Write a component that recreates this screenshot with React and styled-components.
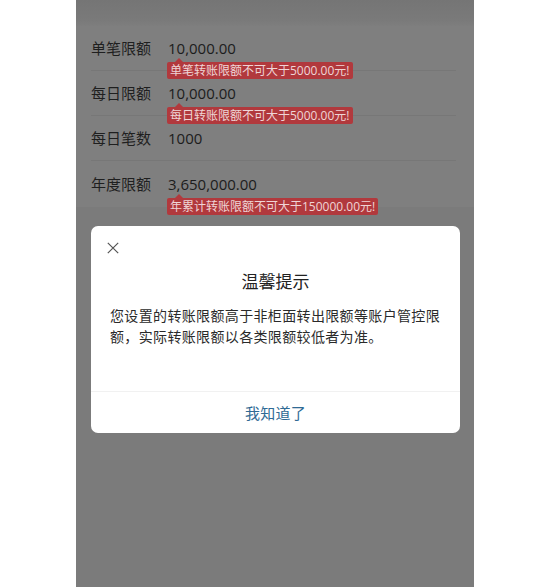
import React from "react";
import styled, { createGlobalStyle } from "styled-components";

const Global = createGlobalStyle`
  html, body { margin: 0; padding: 0; background: #ffffff; }
  * { box-sizing: border-box; }
  body { font-family: "Open Sans", "Noto Sans CJK SC", sans-serif; }
`;

const Stage = styled.div`
  width: 550px;
  height: 587px;
  display: flex;
  justify-content: center;
  background: #ffffff;
`;

const Phone = styled.div`
  position: relative;
  width: 398px;
  height: 587px;
  background: #7b7b7b;
  display: flex;
  flex-direction: column;
  overflow: hidden;
`;

const TopBand = styled.div`
  height: 26px;
  background: linear-gradient(#757575, #7a7a7a 80%, #7e7e7e);
`;

const List = styled.div`
  background: #7f7f7f;
  padding-bottom: 1px;
`;

const Row = styled.div`
  display: flex;
  align-items: center;
  height: 45px;
  margin: 0 18px 0 15px;
  border-bottom: ${(p) => (p.$last ? "none" : "1px solid #777777")};
`;

const Label = styled.div`
  width: 77px;
  flex: none;
  font-family: "Noto Sans CJK SC", sans-serif;
  font-size: 15px;
  color: #1f1f1f;
  line-height: 20px;
`;

const ValueCell = styled.div`
  position: relative;
  font-family: "Open Sans", "Noto Sans CJK SC", sans-serif;
  font-size: 15px;
  color: #1c1c1c;
  line-height: 20px;
`;

const Tag = styled.div`
  position: absolute;
  left: -1px;
  top: 24px;
  z-index: 2;
  white-space: nowrap;
  background: #b1393d;
  color: #efd5d6;
  font-family: "Open Sans", "Noto Sans CJK SC", sans-serif;
  font-size: 12px;
  line-height: 17px;
  padding: 0 3px;
  border-radius: 2px;
  &::before {
    content: "";
    position: absolute;
    left: 8px;
    top: -4px;
    border-left: 4px solid transparent;
    border-right: 4px solid transparent;
    border-bottom: 4px solid #b1393d;
  }
`;

const Dialog = styled.div`
  position: absolute;
  left: 15px;
  top: 226px;
  width: 369px;
  background: #ffffff;
  border-radius: 7px;
  display: flex;
  flex-direction: column;
  overflow: hidden;
`;

const CloseBtn = styled.div`
  padding: 16px 0 0 16px;
  height: 28px;
  display: flex;
`;

const Title = styled.div`
  margin-top: 15px;
  text-align: center;
  font-family: "Noto Sans CJK SC", sans-serif;
  font-size: 17px;
  line-height: 24px;
  color: #222222;
`;

const Body = styled.div`
  margin-top: 12px;
  padding: 0 18px 0 19px;
  min-height: 86px;
  font-family: "Noto Sans CJK SC", sans-serif;
  font-size: 14px;
  letter-spacing: 0.35px;
  line-height: 21px;
  color: #2a2a2a;
`;

const Footer = styled.div`
  border-top: 1px solid #f1f1f1;
  height: 42px;
  display: flex;
  align-items: center;
  justify-content: center;
  font-family: "Noto Sans CJK SC", sans-serif;
  font-size: 15px;
  color: #2f6a94;
  letter-spacing: 0.3px;
`;

const rows = [
  { label: "单笔限额", value: "10,000.00", tip: "单笔转账限额不可大于5000.00元!" },
  { label: "每日限额", value: "10,000.00", tip: "每日转账限额不可大于5000.00元!" },
  { label: "每日笔数", value: "1000" },
  { label: "年度限额", value: "3,650,000.00", tip: "年累计转账限额不可大于150000.00元!" },
];

export default function App() {
  return (
    <>
      <Global />
      <Stage>
        <Phone>
          <TopBand />
          <List>
            {rows.map((r, i) => (
              <Row key={r.label} $last={i === rows.length - 1}>
                <Label>{r.label}</Label>
                <ValueCell>
                  {r.value}
                  {r.tip && <Tag>{r.tip}</Tag>}
                </ValueCell>
              </Row>
            ))}
          </List>
          <Dialog>
            <CloseBtn>
              <svg width="12" height="12" viewBox="0 0 12 12">
                <path d="M0.8 0.8 L11.2 11.2 M11.2 0.8 L0.8 11.2" stroke="#555" strokeWidth="1.2" fill="none" />
              </svg>
            </CloseBtn>
            <Title>温馨提示</Title>
            <Body>您设置的转账限额高于非柜面转出限额等账户管控限额，实际转账限额以各类限额较低者为准。</Body>
            <Footer>我知道了</Footer>
          </Dialog>
        </Phone>
      </Stage>
    </>
  );
}
